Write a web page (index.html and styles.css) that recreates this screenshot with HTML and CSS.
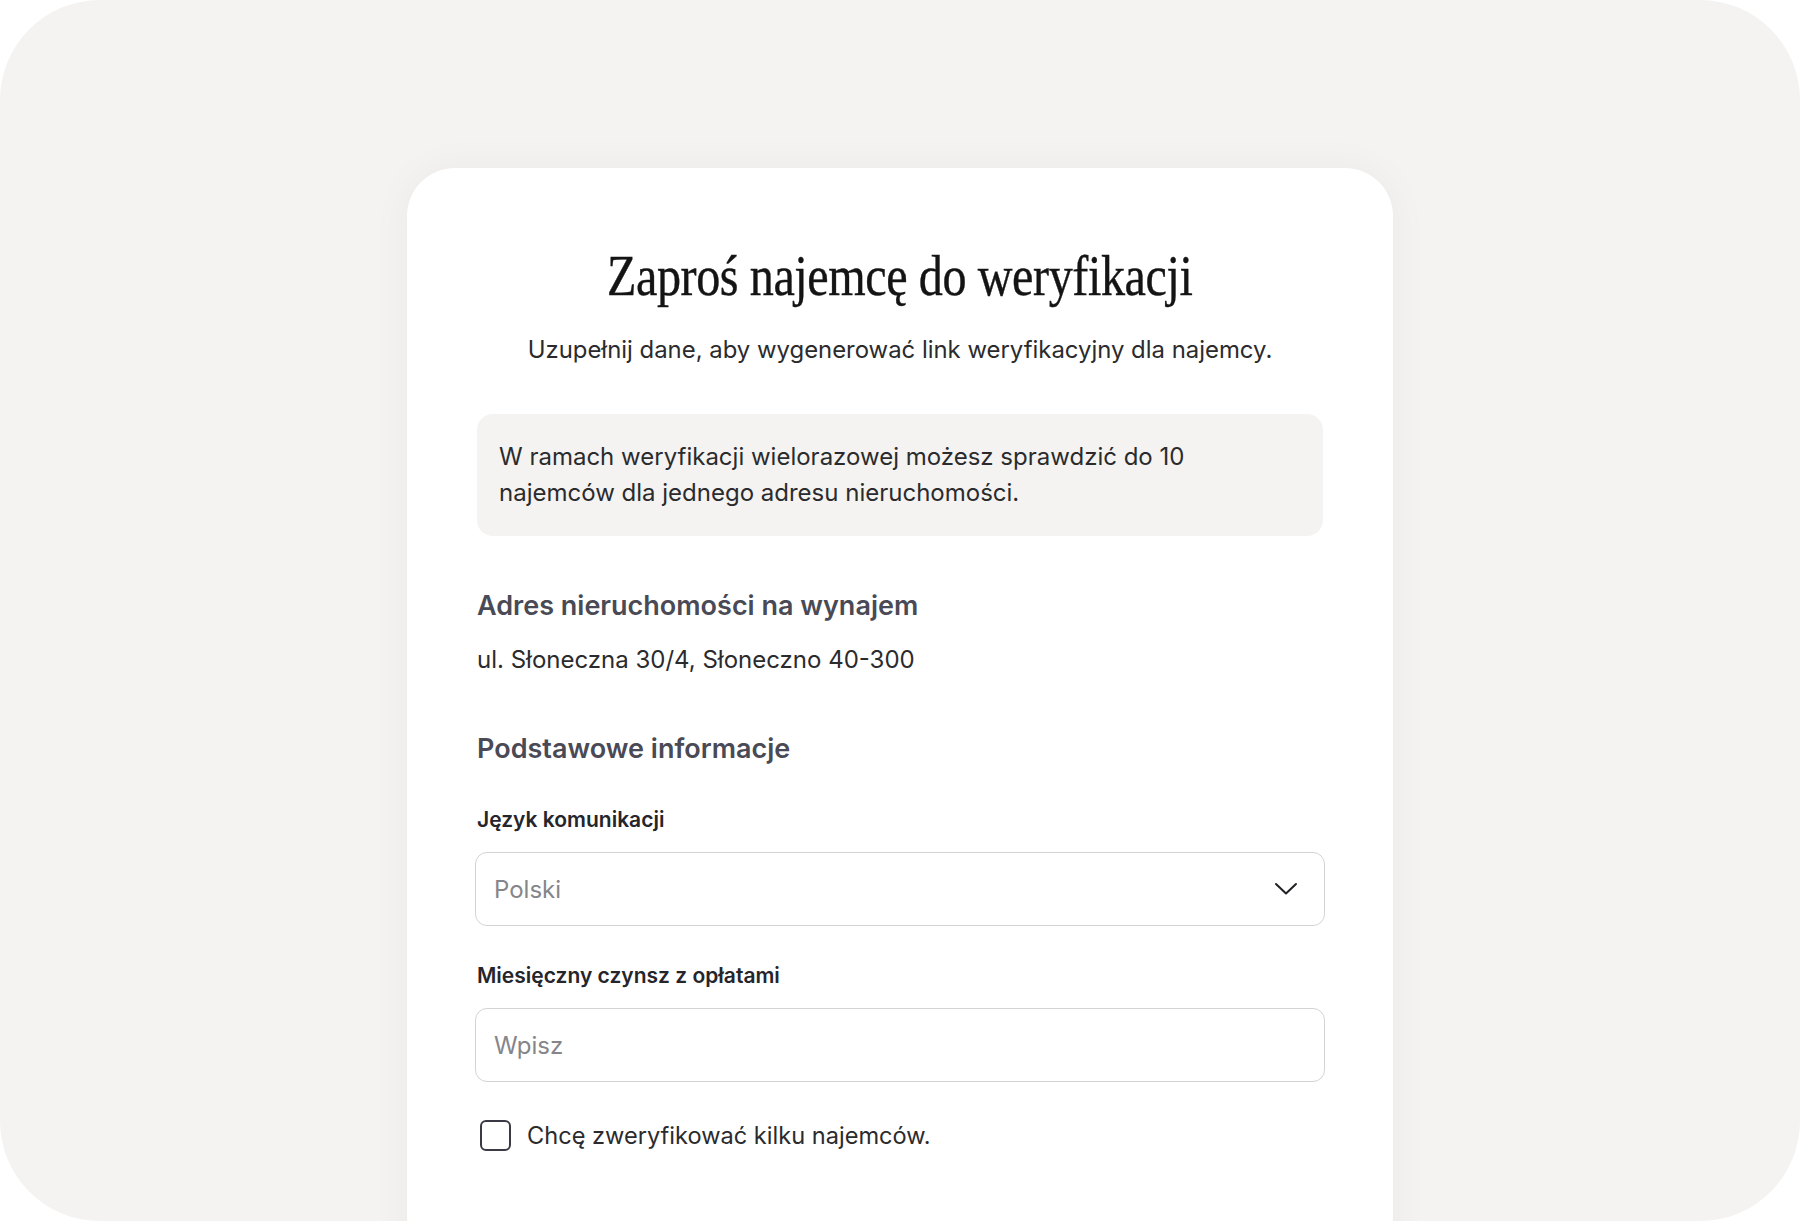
FILE: index.html
```html
<!DOCTYPE html>
<html lang="pl">
<head>
  <meta charset="UTF-8" />
  <title>Zaproś najemcę do weryfikacji</title>
  <meta name="viewport" content="width=device-width, initial-scale=1.0" />
  <link rel="stylesheet" href="styles.css">
</head>
<body>

<div class="frame">
  <div class="card">
    <h1><span>Zaproś najemcę do weryfikacji</span></h1>
    <p class="lead">Uzupełnij dane, aby wygenerować link weryfikacyjny dla najemcy.</p>

    <div class="notice">
      <p>W ramach weryfikacji wielorazowej możesz sprawdzić do 10 najemców dla jednego adresu nieruchomości.</p>
    </div>

    <h2 class="section-title">Adres nieruchomości na wynajem</h2>
    <p class="address">ul. Słoneczna 30/4, Słoneczno 40-300</p>

    <h2 class="section-title basic">Podstawowe informacje</h2>

    <div class="field">
      <label for="lang">Język komunikacji</label>
      <div class="select" id="lang">
        <span class="placeholder">Polski</span>
        <svg width="24" height="14" viewBox="0 0 24 14" fill="none">
          <polyline points="2,2 12,11.5 22,2" stroke="#1f1f24" stroke-width="2" stroke-linecap="round" stroke-linejoin="round"/>
        </svg>
      </div>
    </div>

    <div class="field">
      <label for="rent">Miesięczny czynsz z opłatami</label>
      <input type="text" id="rent" placeholder="Wpisz" />
    </div>

    <label class="check">
      <span class="box"></span>
      Chcę zweryfikować kilku najemców.
    </label>
  </div>
</div>

</body>
</html>
```

FILE: styles.css
```css
html, body {
  margin: 0;
  background: #fff;
}

body {
  font-family: Inter, 'Noto Sans', sans-serif;
  color: #2b2b2e;
}

.frame {
  height: 1221px;
  box-sizing: border-box;
  background: #f4f3f1;
  border-radius: 100px;
  overflow: hidden;
  display: flex;
  justify-content: center;
  padding-top: 168px;
}

.card {
  width: 986px;
  min-height: 1200px;
  box-sizing: border-box;
  background: #fff;
  border-radius: 48px 48px 0 0;
  padding: 76px 70px 0;
  box-shadow: 0 0 40px rgba(0,0,0,0.045);
}

h1 {
  margin: 0;
  text-align: center;
  font-family: 'Liberation Serif', serif;
  font-weight: 400;
  font-size: 58px;
  line-height: 64px;
  color: #141414;
  letter-spacing: -0.5px;
  -webkit-text-stroke: 0.4px #141414;
}

h1 span {
  display: inline-block;
  transform: scaleX(0.83);
}

.lead {
  margin: 26px 0 0;
  text-align: center;
  font-size: 23.9px;
  line-height: 32px;
  color: #2b2b2e;
}

.notice {
  margin-top: 48px;
  background: #f4f3f1;
  border-radius: 16px;
  padding: 25px 22px;
}

.notice p {
  margin: 0;
  max-width: 740px;
  font-size: 24px;
  line-height: 36px;
}

.section-title {
  margin: 0;
  font-size: 27px;
  line-height: 34px;
  font-weight: 600;
  color: #4a4a56;
}

.notice + .section-title {
  margin-top: 53px;
}

.address {
  margin: 20px 0 0;
  font-size: 24px;
  line-height: 34px;
}

.section-title.basic {
  margin-top: 55px;
}

.field {
  margin-top: 40px;
}

.field label {
  display: block;
  font-size: 21px;
  line-height: 28px;
  font-weight: 600;
  color: #25252a;
  margin-bottom: 18px;
}

.select,
.field input {
  display: flex;
  align-items: center;
  justify-content: space-between;
  height: 74px;
  box-sizing: border-box;
  margin: 0 -2px;
  width: calc(100% + 4px);
  border: 1.5px solid #d3d3d6;
  border-radius: 12px;
  padding: 0 26px 0 18px;
  font-family: inherit;
  font-size: 24px;
  color: #2b2b2e;
  background: #fff;
}

.field input::placeholder,
.placeholder {
  color: #85858a;
}

.field + .field {
  margin-top: 36px;
}

.check {
  display: flex;
  align-items: center;
  gap: 16px;
  margin-top: 38px;
  font-size: 23.6px;
  color: #2b2b2e;
}

.box {
  width: 27px;
  height: 27px;
  margin-left: 3px;
  border: 2px solid #3a3a45;
  border-radius: 6px;
}
```
